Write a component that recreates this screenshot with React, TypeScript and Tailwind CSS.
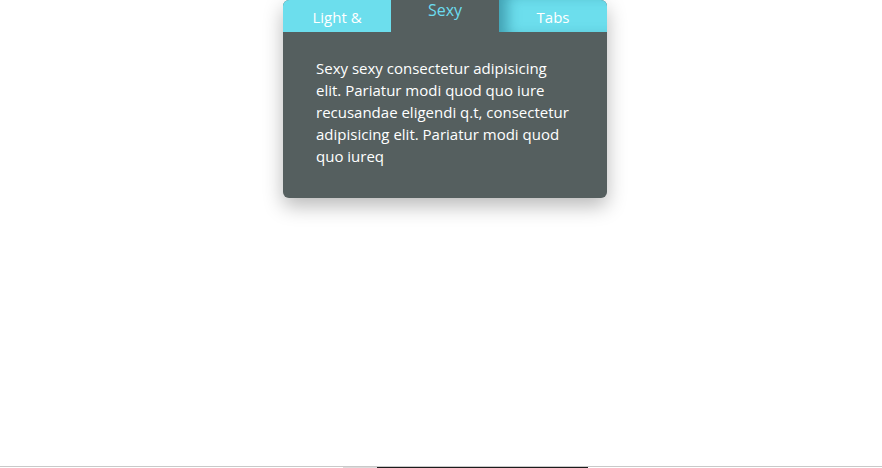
import React, { useState } from 'react';

const tabs = [
  { id: 'light', label: 'Light &' },
  { id: 'sexy', label: 'Sexy' },
  { id: 'tabs', label: 'Tabs' },
];

export default function App() {
  const [active, setActive] = useState('sexy');

  return (
    <div className="min-h-[468px] h-[468px] flex flex-col bg-white overflow-hidden" style={{ fontFamily: '"Open Sans", sans-serif' }}>
      <div className="flex justify-center pl-2">
        <div className="w-[324px] rounded-md overflow-hidden bg-[#555f5f] shadow-[0_8px_20px_rgba(0,0,0,0.28)]">
          {/* Tabs */}
          <div className="flex h-8">
            {tabs.map((tab, i) => {
              const isActive = tab.id === active;
              const afterActive = i > 0 && tabs[i - 1].id === active;
              return (
                <button
                  key={tab.id}
                  onClick={() => setActive(tab.id)}
                  className={
                    isActive
                      ? 'flex-1 bg-[#555f5f] text-[#6cdcef] text-[16px] leading-5 pt-0 flex justify-center items-start'
                      : afterActive
                      ? 'flex-1 bg-[#6cdeed] text-white text-[15px] leading-5 pt-[7px] flex justify-center items-start shadow-[inset_14px_0_14px_-6px_rgba(30,110,130,0.55)]'
                      : 'flex-1 bg-[#6cdeed] text-white text-[15px] leading-5 pt-[7px] flex justify-center items-start'
                  }
                >
                  {tab.label}
                </button>
              );
            })}
          </div>

          {/* Content */}
          <div className="px-[33px] pt-[25px] pb-[30px] h-[166px]">
            <p className="text-[15px] leading-[22px] text-white">
              Sexy sexy consectetur adipisicing elit. Pariatur modi quod quo iure recusandae eligendi q.t, consectetur adipisicing elit. Pariatur modi quod quo iureq
            </p>
          </div>
        </div>
      </div>

      {/* bottom strip */}
      <div className="mt-auto flex h-[2px] border-t border-[#c9c9c9]">
        <div className="w-[343px]" />
        <div className="w-[34px] bg-[#dcdcdc]" />
        <div className="w-[211px] bg-[#1c1c1c]" />
      </div>
    </div>
  );
}
